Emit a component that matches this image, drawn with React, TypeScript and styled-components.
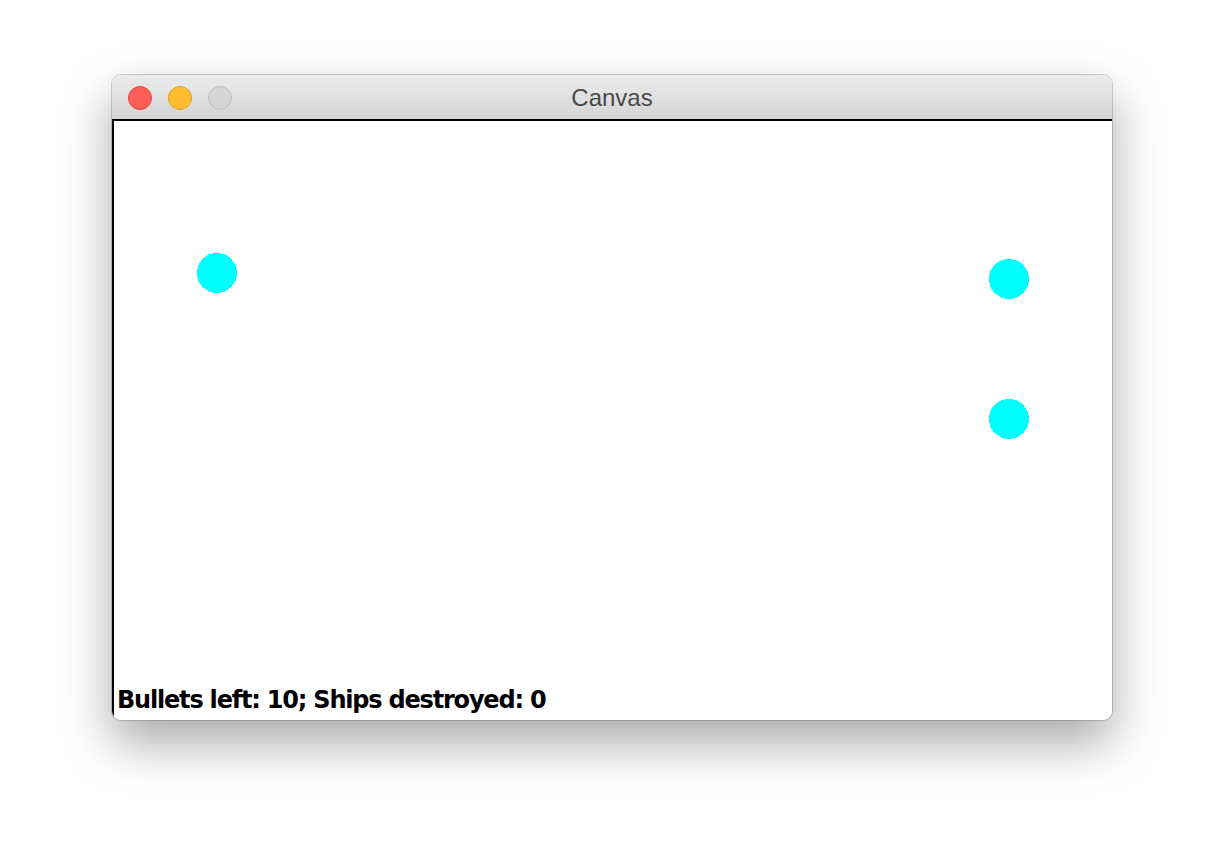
import React from "react";
import styled, { createGlobalStyle } from "styled-components";

const GlobalStyle = createGlobalStyle`
  html, body {
    margin: 0;
    padding: 0;
    background: #ffffff;
  }
  body {
    font-family: "Liberation Sans", Arial, sans-serif;
  }
`;

const Page = styled.div`
  width: 1224px;
  height: 868px;
  padding: 75px 0 0 112px;
  box-sizing: border-box;
  background: #ffffff;
  overflow: hidden;
`;

// macOS style window
const Window = styled.div`
  width: 1000px;
  display: flex;
  flex-direction: column;
  border-radius: 9px;
  overflow: hidden;
  box-shadow: 0 22px 50px rgba(0, 0, 0, 0.35), 0 0 0 1px rgba(0, 0, 0, 0.18);
`;

const TitleBar = styled.div`
  position: relative;
  height: 44px;
  display: flex;
  align-items: center;
  justify-content: center;
  background: linear-gradient(#ebebeb, #d5d5d5);
  border-bottom: 2px solid #000;
`;

const Lights = styled.div`
  position: absolute;
  left: 16px;
  top: 11px;
  display: flex;
  gap: 16px;
`;

const Light = styled.span<{ $fill: string; $edge: string }>`
  width: 24px;
  height: 24px;
  border-radius: 50%;
  box-sizing: border-box;
  background: ${({ $fill }) => $fill};
  border: 1px solid ${({ $edge }) => $edge};
`;

const Title = styled.div`
  font-family: "Liberation Sans", Arial, sans-serif;
  font-size: 24px;
  color: #4a4a4a;
  padding-top: 2px;
`;

const Canvas = styled.div`
  position: relative;
  height: 599px;
  background: #ffffff;
  border-left: 2px solid #000;
  display: flex;
  align-items: flex-end;
`;

const Status = styled.div`
  font-family: "DejaVu Sans", sans-serif;
  font-weight: bold;
  font-size: 24px;
  letter-spacing: -1.2px;
  color: #000;
  padding: 0 0 6px 3px;
  line-height: 28px;
  -webkit-font-smoothing: none;
  text-rendering: optimizeSpeed;
`;

const Layer = styled.svg`
  position: absolute;
  left: 0;
  top: 0;
  shape-rendering: crispEdges;
`;

const ships = [
  { x: 103, y: 152 },
  { x: 895, y: 158 },
  { x: 895, y: 298 },
];

export default function App() {
  return (
    <>
      <GlobalStyle />
      <Page>
        <Window>
          <TitleBar>
            <Lights>
              <Light $fill="#fe5f57" $edge="#e0443e" />
              <Light $fill="#febc2e" $edge="#dea123" />
              <Light $fill="#d5d5d5" $edge="#bcbcbc" />
            </Lights>
            <Title>Canvas</Title>
          </TitleBar>
          <Canvas>
            <Layer width="998" height="599">
              {ships.map((s, i) => (
                <circle key={i} cx={s.x} cy={s.y} r={20} fill="#00ffff" />
              ))}
            </Layer>
            <Status>Bullets left: 10; Ships destroyed: 0</Status>
          </Canvas>
        </Window>
      </Page>
    </>
  );
}
